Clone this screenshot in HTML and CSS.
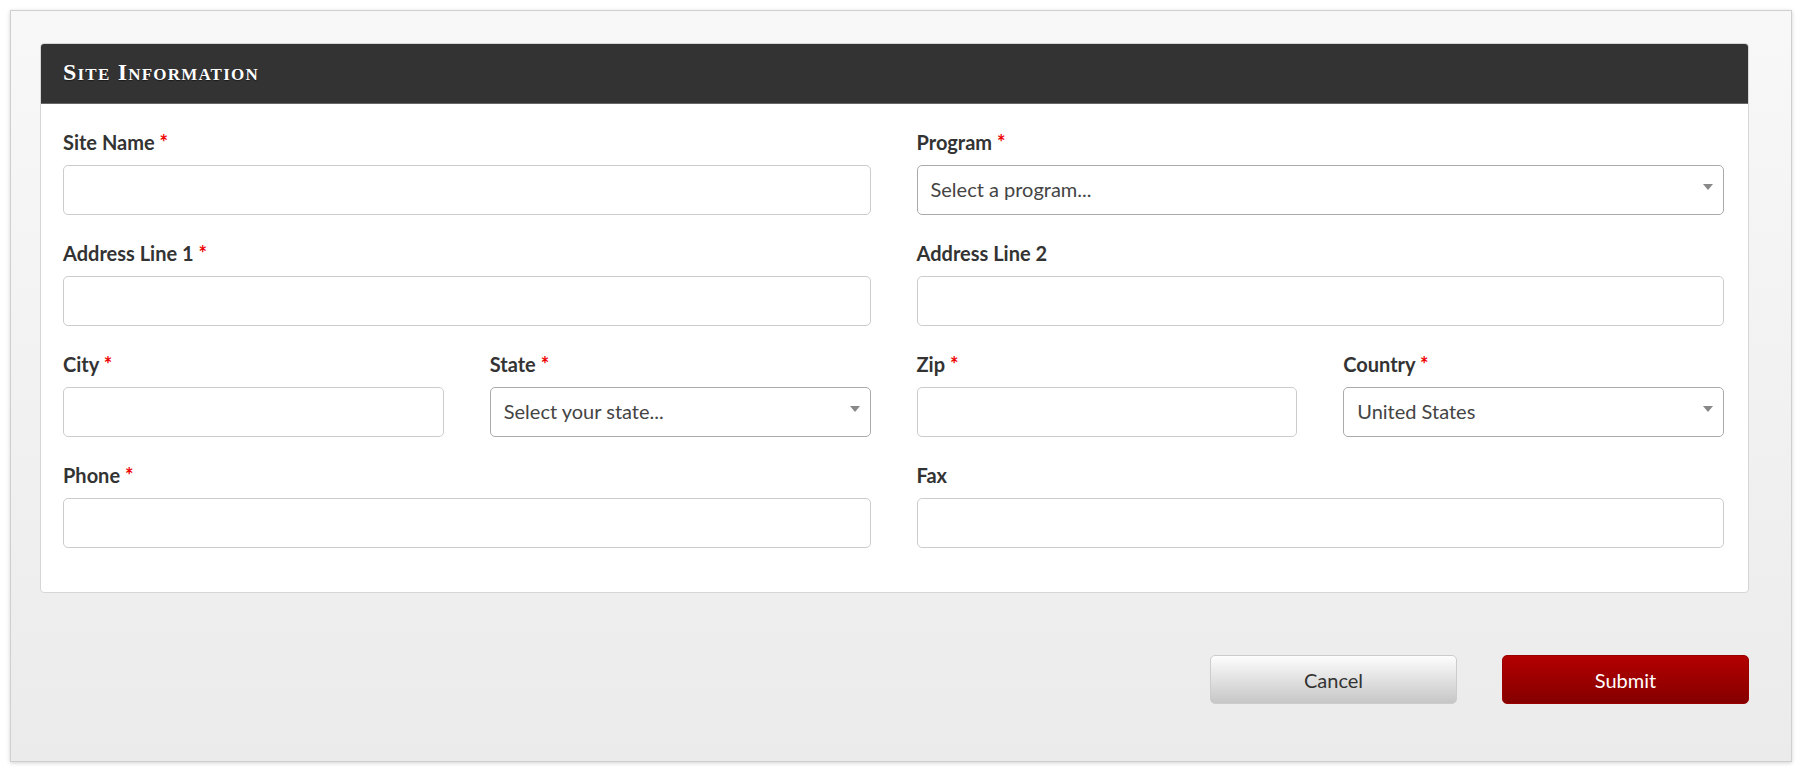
FILE: index.html
```html
<!DOCTYPE html>
<html lang="en">
<head>
    <meta charset="UTF-8">
    <meta name="viewport" content="width=device-width, initial-scale=1.0">
    <title>Site Information</title>
    <link rel="stylesheet" href="styles.css">
</head>
<body>
    <div class="frame">
        <div class="panel">
            <div class="panel-heading">
                <h2>Site Information</h2>
            </div>
            <div class="panel-body">
                <form class="form-grid">
                    <!-- Wiersz 1 -->
                    <div class="field span-2">
                        <label>Site Name <span class="req">*</span></label>
                        <input type="text">
                    </div>
                    <div class="field span-2">
                        <label>Program <span class="req">*</span></label>
                        <div class="select">Select a program...</div>
                    </div>

                    <!-- Wiersz 2 -->
                    <div class="field span-2">
                        <label>Address Line 1 <span class="req">*</span></label>
                        <input type="text">
                    </div>
                    <div class="field span-2">
                        <label>Address Line 2</label>
                        <input type="text">
                    </div>

                    <!-- Wiersz 3 -->
                    <div class="field">
                        <label>City <span class="req">*</span></label>
                        <input type="text">
                    </div>
                    <div class="field">
                        <label>State <span class="req">*</span></label>
                        <div class="select">Select your state...</div>
                    </div>
                    <div class="field">
                        <label>Zip <span class="req">*</span></label>
                        <input type="text">
                    </div>
                    <div class="field">
                        <label>Country <span class="req">*</span></label>
                        <div class="select">United States</div>
                    </div>

                    <!-- Wiersz 4 -->
                    <div class="field span-2">
                        <label>Phone <span class="req">*</span></label>
                        <input type="text">
                    </div>
                    <div class="field span-2">
                        <label>Fax</label>
                        <input type="text">
                    </div>
                </form>
            </div>
        </div>

        <div class="actions">
            <button class="btn btn-cancel">Cancel</button>
            <button class="btn btn-submit">Submit</button>
        </div>
    </div>
</body>
</html>
```

FILE: styles.css
```css
html, body {
    margin: 0;
    padding: 0;
    background: #fff;
}
body {
    font-family: Lato, "Open Sans", sans-serif;
    padding: 10px;
    box-sizing: border-box;
    height: 772px;
}
.frame {
    height: 100%;
    box-sizing: border-box;
    border: 1px solid #cfcfcf;
    box-shadow: 0 1px 4px rgba(0, 0, 0, 0.18);
    background: linear-gradient(to bottom, #f8f8f8, #ebebeb);
    padding: 32px 42px 0 29px;
}
.panel {
    background: #fff;
    border: 1px solid #d6d6d6;
    border-radius: 4px;
}
.panel-heading {
    background-color: #333;
    height: 59px;
    border-bottom: 1px solid #666;
    border-radius: 3px 3px 0 0;
    display: flex;
    align-items: center;
    padding: 0 22px;
}
.panel-heading h2 {
    margin: 0;
    color: #fff;
    font-family: "Liberation Serif", serif;
    font-variant: small-caps;
    font-weight: bold;
    font-size: 24px;
    letter-spacing: 1.2px;
    padding-bottom: 3px;
    text-shadow: 0 1px 1px rgba(0, 0, 0, 0.5);
}
.panel-body {
    padding: 26px 24px 44px 22px;
}
.form-grid {
    display: grid;
    grid-template-columns: repeat(4, 1fr);
    column-gap: 46px;
    row-gap: 26px;
}
.span-2 {
    grid-column: span 2;
}
.field label {
    display: block;
    font-weight: bold;
    font-size: 20px;
    line-height: 24px;
    color: #333;
    margin-bottom: 11px;
}
.req {
    color: #e00;
}
.field input,
.select {
    display: block;
    width: 100%;
    height: 50px;
    box-sizing: border-box;
    border: 1px solid #ccc;
    border-radius: 5px;
    background: #fff;
    font-family: inherit;
    font-size: 20px;
    color: #444;
    padding: 0 13px;
}
.select {
    position: relative;
    border-color: #aaa;
    line-height: 47px;
}
.select::after {
    content: "";
    position: absolute;
    right: 10px;
    top: 18px;
    border-left: 5px solid transparent;
    border-right: 5px solid transparent;
    border-top: 6px solid #888;
}
.actions {
    display: flex;
    justify-content: flex-end;
    gap: 45px;
    margin-top: 62px;
}
.btn {
    width: 247px;
    height: 49px;
    border-radius: 5px;
    font-family: inherit;
    font-size: 20px;
    cursor: pointer;
}
.btn-cancel {
    border: 1px solid #ccc;
    color: #333;
    background: linear-gradient(to bottom, #fdfdfd, #c6c6c6);
}
.btn-submit {
    border: 1px solid #900;
    color: #fff;
    background: linear-gradient(to bottom, #b30000, #850000);
}
```
